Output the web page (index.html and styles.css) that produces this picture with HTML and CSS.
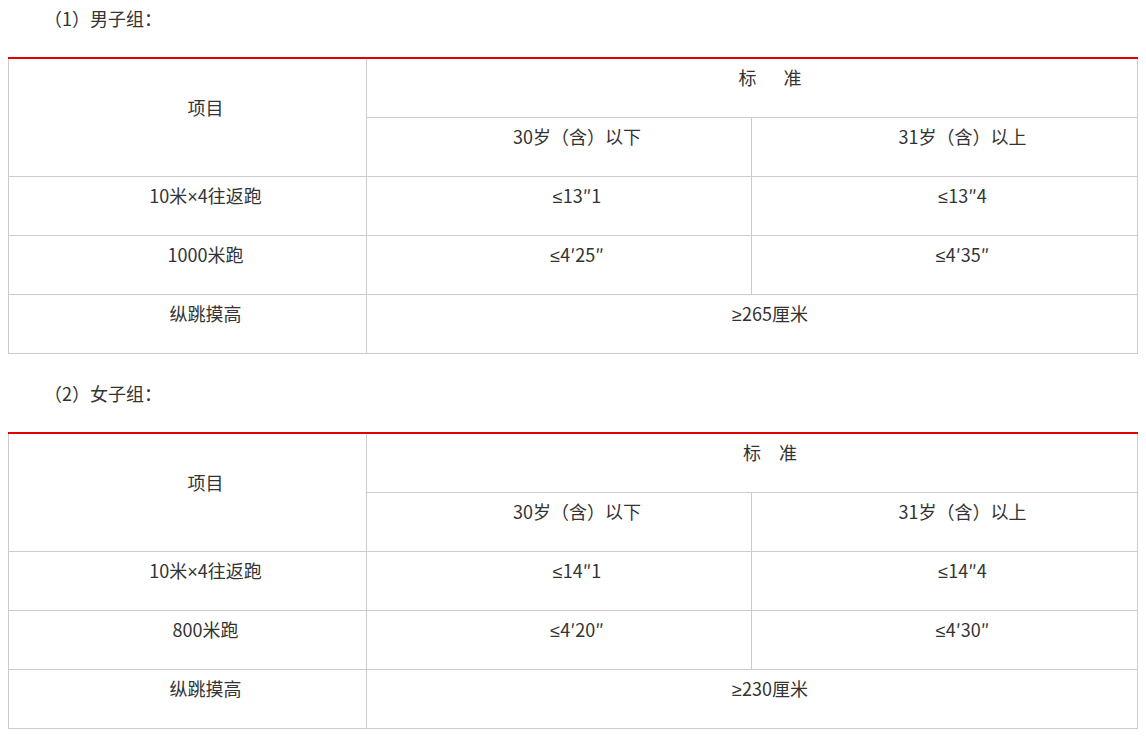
FILE: index.html
```html
<!DOCTYPE html>
<html lang="zh-CN">
<head>
<meta charset="utf-8">
<title>体能测试标准</title>
<link rel="stylesheet" href="styles.css">
</head>
<body>
<p class="heading">（1）男子组：</p>
<table class="std">
  <colgroup><col class="c1"><col class="c2"><col class="c3"></colgroup>
  <tr>
    <td rowspan="2"><p>项目</p></td>
    <td colspan="2"><p>标&emsp;&ensp;准</p></td>
  </tr>
  <tr>
    <td><p>30岁（含）以下</p></td>
    <td><p>31岁（含）以上</p></td>
  </tr>
  <tr>
    <td><p>10米<span class="sym">×</span>4往返跑</p></td>
    <td><p><span class="sym">≤</span>13″1</p></td>
    <td><p><span class="sym">≤</span>13″4</p></td>
  </tr>
  <tr>
    <td><p>1000米跑</p></td>
    <td><p><span class="sym">≤</span>4′25″</p></td>
    <td><p><span class="sym">≤</span>4′35″</p></td>
  </tr>
  <tr>
    <td><p>纵跳摸高</p></td>
    <td colspan="2"><p><span class="sym">≥</span>265厘米</p></td>
  </tr>
</table>
<p class="heading">（2）女子组：</p>
<table class="std">
  <colgroup><col class="c1"><col class="c2"><col class="c3"></colgroup>
  <tr>
    <td rowspan="2"><p>项目</p></td>
    <td colspan="2"><p>标&emsp;准</p></td>
  </tr>
  <tr>
    <td><p>30岁（含）以下</p></td>
    <td><p>31岁（含）以上</p></td>
  </tr>
  <tr>
    <td><p>10米<span class="sym">×</span>4往返跑</p></td>
    <td><p><span class="sym">≤</span>14″1</p></td>
    <td><p><span class="sym">≤</span>14″4</p></td>
  </tr>
  <tr>
    <td><p>800米跑</p></td>
    <td><p><span class="sym">≤</span>4′20″</p></td>
    <td><p><span class="sym">≤</span>4′30″</p></td>
  </tr>
  <tr>
    <td><p>纵跳摸高</p></td>
    <td colspan="2"><p><span class="sym">≥</span>230厘米</p></td>
  </tr>
</table>
</body>
</html>
```
FILE: styles.css
```css
html, body {
  background: #fff;
}
body {
  margin: 8px;
  font-family: "Noto Sans CJK SC", "Noto Sans", sans-serif;
  font-size: 18px;
  color: #333;
}
p {
  margin: 0;
  line-height: 24px;
  height: 24px;
  text-indent: 2em;
}
.sym {
  font-family: "Liberation Sans", "DejaVu Sans", sans-serif;
  line-height: 1;
}
.heading {
  line-height: 20px;
  height: 20px;
  margin: 0 0 29px;
}
.std {
  width: 100%;
  border-collapse: collapse;
  border-top: 2px solid #e00000;
  margin-bottom: 29px;
  table-layout: fixed;
}
.std .c1 { width: 358px; }
.std .c2 { width: 385px; }
.std .c3 { width: 386px; }
.std td {
  border: 1px solid #cccccc;
  padding: 6px 10px 28px;
  text-align: center;
  vertical-align: middle;
}
.std tr:first-child td {
  border-top: 2px solid #e00000;
}
```
